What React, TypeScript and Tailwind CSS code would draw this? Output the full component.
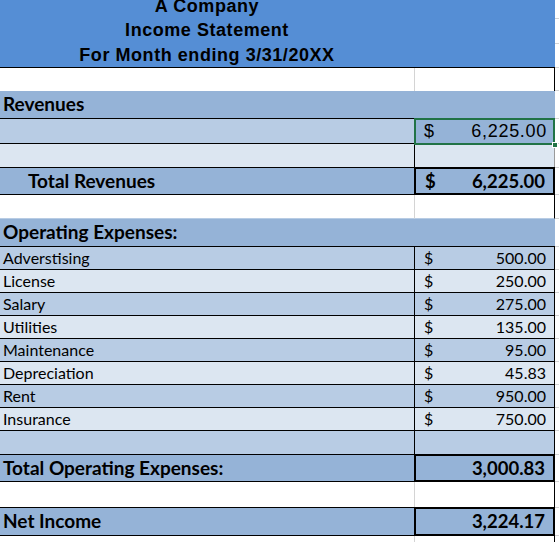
import React from "react";

const MED = "bg-[#95B3D7]";
const LIGHT = "bg-[#B8CCE4]";
const PALE = "bg-[#DCE6F1]";

function Strip({ h, line = true }: { h: string; line?: boolean }) {
  return <div className={`w-[4px] ${h} bg-white ${line ? "border-b border-[#D4D4D4]" : ""}`} />;
}

function ExpenseRow({ label, value, bg }: { label: string; value: string; bg: string }) {
  return (
    <div className="flex h-[23px]">
      <div className={`w-[414px] ${bg} border-b border-black flex items-center pl-[3px] text-[16px] text-black`}>
        {label}
      </div>
      <div className={`w-[141px] ${bg} border-b border-l border-r border-black flex items-center justify-between pl-[9px] pr-[8px] text-[16px] text-black`}>
        <span>$</span>
        <span>{value}</span>
      </div>
      <Strip h="h-[23px]" />
    </div>
  );
}

export default function App() {
  const expenses: [string, string][] = [
    ["Adverstising", "500.00"],
    ["License", "250.00"],
    ["Salary", "275.00"],
    ["Utilities", "135.00"],
    ["Maintenance", "95.00"],
    ["Depreciation", "45.83"],
    ["Rent", "950.00"],
    ["Insurance", "750.00"],
  ];
  return (
    <div className="w-[559px] h-[542px] bg-white overflow-hidden font-['Lato',sans-serif] text-black">
      {/* Header */}
      <div className="flex h-[68px]">
        <div className="w-[555px] h-[68px] bg-[#558ED5] border-b border-black flex">
          <div className="w-[414px] h-[67px] overflow-hidden flex flex-col justify-end items-center font-['Liberation_Sans',Arial,sans-serif] font-bold text-[18px] tracking-[0.55px] leading-[24.5px] text-black">
            <div>A Company</div>
            <div>Income Statement</div>
            <div>For Month ending 3/31/20XX</div>
          </div>
        </div>
        <div className="flex flex-col">
          <Strip h="h-[19px]" />
          <Strip h="h-[25px]" />
          <Strip h="h-[24px]" />
        </div>
      </div>

      {/* blank white */}
      <div className="flex h-[23px]">
        <div className="w-[414px] bg-white" />
        <div className="w-[141px] bg-white border-l border-[#D4D4D4] border-r-[1.5px] border-r-black" />
        <Strip h="h-[23px]" />
      </div>

      {/* Revenues */}
      <div className="flex h-[28px]">
        <div className={`w-[414px] ${MED} border-b border-black flex items-center pl-[3px] font-bold text-[19px]`}>
          Revenues
        </div>
        <div className={`w-[141px] ${MED}`} />
        <Strip h="h-[28px]" />
      </div>

      {/* revenue value row */}
      <div className="flex h-[25px]">
        <div className={`w-[414px] ${LIGHT} border-b border-black`} />
        <div className={`relative w-[141px] ${MED} flex items-center justify-between pl-[10px] pr-[8px] font-['Liberation_Sans',Arial,sans-serif] text-[18px] tracking-[0.7px]`}>
          <span>$</span>
          <span>6,225.00</span>
          <div className="absolute -top-[1px] -bottom-[1px] left-0 right-0 border-2 border-[#217346]" />
          <div className="absolute -bottom-[4px] -right-[3px] w-[6px] h-[6px] bg-[#217346] border border-white" />
        </div>
        <Strip h="h-[25px]" />
      </div>

      {/* pale blank */}
      <div className="flex h-[24px]">
        <div className={`w-[414px] ${PALE} border-b border-black`} />
        <div className={`w-[141px] ${PALE} border-l border-black border-b border-r border-r-[#9a9a9a]`} />
        <Strip h="h-[24px]" />
      </div>

      {/* Total Revenues */}
      <div className="flex h-[27px]">
        <div className={`w-[414px] ${MED} border-b border-black flex items-center pl-[28px] font-bold text-[19px]`}>
          Total Revenues
        </div>
        <div className={`relative w-[141px] ${MED} flex items-center justify-between pl-[11px] pr-[10px] font-bold text-[18.5px]`}>
          <span>$</span>
          <span>6,225.00</span>
          <div className="absolute -top-[1px] bottom-0 left-0 right-0 border-2 border-black" />
        </div>
        <Strip h="h-[27px]" />
      </div>

      {/* white blank */}
      <div className="flex h-[24px]">
        <div className="w-[414px] bg-white border-b border-[#B8CCE4]" />
        <div className="w-[141px] bg-white border-l border-[#D4D4D4] border-r-[1.5px] border-r-black border-b border-b-[#B8CCE4]" />
        <Strip h="h-[24px]" />
      </div>

      {/* Operating Expenses */}
      <div className="flex h-[28px]">
        <div className={`w-[414px] ${MED} border-b border-black flex items-center pl-[3px] font-bold text-[19px]`}>
          Operating Expenses:
        </div>
        <div className={`w-[141px] ${MED} border-b border-black`} />
        <Strip h="h-[28px]" />
      </div>

      {expenses.map(([l, v], i) => (
        <ExpenseRow key={l} label={l} value={v} bg={i % 2 === 0 ? LIGHT : PALE} />
      ))}

      {/* light blank */}
      <div className="flex h-[24px]">
        <div className={`w-[414px] ${LIGHT} border-b border-black`} />
        <div className={`w-[141px] ${LIGHT} border-l border-r border-black`} />
        <Strip h="h-[24px]" />
      </div>

      {/* Total Operating Expenses */}
      <div className="flex h-[27px]">
        <div className={`w-[414px] ${MED} border-b border-black flex items-center pl-[3px] font-bold text-[19px]`}>
          Total Operating Expenses:
        </div>
        <div className={`relative w-[141px] ${MED} flex items-center justify-end pr-[10px] font-bold text-[18.5px]`}>
          <span>3,000.83</span>
          <div className="absolute -top-[1px] bottom-0 left-0 right-0 border-2 border-black" />
        </div>
        <Strip h="h-[27px]" />
      </div>

      {/* white blank */}
      <div className="flex h-[26px]">
        <div className="w-[414px] bg-white border-b border-black" />
        <div className="w-[141px] bg-white border-l border-[#D4D4D4] border-r-[1.5px] border-r-black" />
        <Strip h="h-[26px]" />
      </div>

      {/* Net Income */}
      <div className="flex h-[28px]">
        <div className={`w-[414px] ${MED} border-b border-black flex items-center pl-[3px] font-bold text-[19px]`}>
          Net Income
        </div>
        <div className={`relative w-[141px] ${MED} flex items-center justify-end pr-[10px] font-bold text-[18.5px]`}>
          <span>3,224.17</span>
          <div className="absolute -top-[1px] bottom-0 left-0 right-0 border-2 border-black" />
        </div>
        <Strip h="h-[28px]" />
      </div>

      {/* trailing white */}
      <div className="flex h-[6px]">
        <div className="w-[414px] bg-white" />
        <div className="w-[141px] bg-white border-l border-[#D4D4D4] border-r-[1.5px] border-r-black" />
        <Strip h="h-[6px]" line={false} />
      </div>
    </div>
  );
}
